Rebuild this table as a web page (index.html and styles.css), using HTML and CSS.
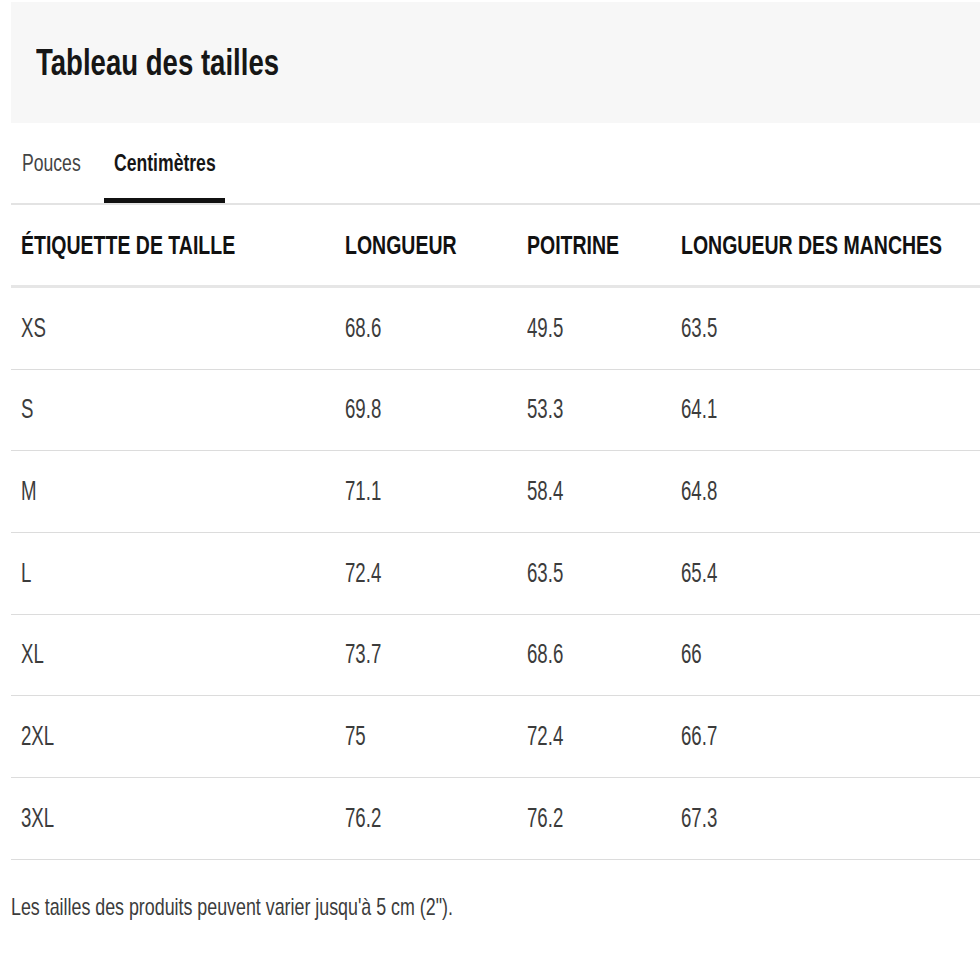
FILE: index.html
```html
<!DOCTYPE html>
<html lang="fr">
<head>
<meta charset="utf-8">
<title>Tableau des tailles</title>
<link rel="stylesheet" href="styles.css">
</head>
<body>
<div class="page">
  <header class="head">
    <h1 class="title"><span class="sq">Tableau des tailles</span></h1>
  </header>
  <nav class="tabs">
    <div class="tab tab-in"><span class="sq">Pouces</span></div>
    <div class="tab tab-cm active"><span class="sq">Centimètres</span></div>
  </nav>
  <table class="chart">
    <colgroup>
      <col class="c1"><col class="c2"><col class="c3"><col class="c4">
    </colgroup>
    <thead>
      <tr><th><span class="sq">ÉTIQUETTE DE TAILLE</span></th><th><span class="sq">LONGUEUR</span></th><th><span class="sq">POITRINE</span></th><th><span class="sq">LONGUEUR DES MANCHES</span></th></tr>
    </thead>
    <tbody>
      <tr><td><span class="sq">XS</span></td><td><span class="sq">68.6</span></td><td><span class="sq">49.5</span></td><td><span class="sq">63.5</span></td></tr>
      <tr><td><span class="sq">S</span></td><td><span class="sq">69.8</span></td><td><span class="sq">53.3</span></td><td><span class="sq">64.1</span></td></tr>
      <tr><td><span class="sq">M</span></td><td><span class="sq">71.1</span></td><td><span class="sq">58.4</span></td><td><span class="sq">64.8</span></td></tr>
      <tr><td><span class="sq">L</span></td><td><span class="sq">72.4</span></td><td><span class="sq">63.5</span></td><td><span class="sq">65.4</span></td></tr>
      <tr><td><span class="sq">XL</span></td><td><span class="sq">73.7</span></td><td><span class="sq">68.6</span></td><td><span class="sq">66</span></td></tr>
      <tr><td><span class="sq">2XL</span></td><td><span class="sq">75</span></td><td><span class="sq">72.4</span></td><td><span class="sq">66.7</span></td></tr>
      <tr><td><span class="sq">3XL</span></td><td><span class="sq">76.2</span></td><td><span class="sq">76.2</span></td><td><span class="sq">67.3</span></td></tr>
    </tbody>
  </table>
  <p class="note"><span class="sq">Les tailles des produits peuvent varier jusqu'à 5 cm (2").</span></p>
</div>
</body>
</html>
```
FILE: styles.css
```css
html, body {
  margin: 0;
  padding: 0;
  background: #ffffff;
}
body {
  font-family: "Liberation Sans", Arial, sans-serif;
  color: #3c3c3c;
  overflow: hidden;
}
.page {
  padding: 2px 0 0 11px;
}
/* condensed look: the reference uses a narrow typeface */
.sq {
  display: inline-block;
  white-space: nowrap;
  transform-origin: 0 50%;
}
.head {
  background: #f7f7f7;
  height: 121px;
  display: flex;
  align-items: center;
  padding-left: 25px;
}
.title {
  margin: 0;
  font-size: 37px;
  font-weight: 700;
  color: #161616;
  line-height: 1;
}
.title .sq { transform: scaleX(0.745); }
.tabs {
  display: flex;
  height: 80px;
  border-bottom: 2px solid #e3e3e3;
}
.tab {
  display: flex;
  align-items: center;
  box-sizing: border-box;
  font-size: 23px;
  color: #444444;
  line-height: 1;
}
.tab .sq { transform: scaleX(0.765); }
.tab-in {
  width: 93px;
  padding-left: 11px;
}
.tab-cm {
  width: 121px;
  padding-left: 10px;
}
.tab.active {
  font-weight: 700;
  color: #161616;
  border-bottom: 5px solid #111111;
  padding-top: 5px;
}
.chart {
  width: 969px;
  border-collapse: collapse;
  table-layout: fixed;
}
.c1 { width: 324px; }
.c2 { width: 182px; }
.c3 { width: 154px; }
.c4 { width: auto; }
.chart th,
.chart td {
  text-align: left;
  padding: 0 10px;
  vertical-align: middle;
  line-height: 1;
}
.chart th {
  height: 80px;
  font-size: 26px;
  font-weight: 700;
  color: #111111;
  border-bottom: 3px solid #e6e6e6;
}
.chart th .sq { transform: scaleX(0.75); }
.chart td {
  height: 80.67px;
  font-size: 27px;
  color: #3c3c3c;
  border-bottom: 1px solid #dcdcdc;
}
.chart td .sq { transform: scaleX(0.69); }
.note {
  margin: 32px 0 0;
  font-size: 24px;
  line-height: 30px;
  color: #3c3c3c;
}
.note .sq { transform: scaleX(0.743); }
```
